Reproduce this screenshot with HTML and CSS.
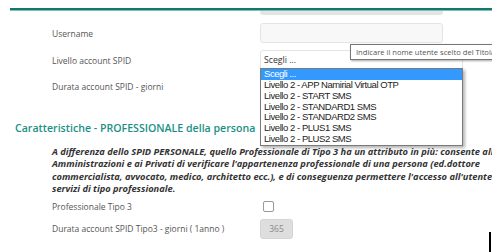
FILE: index.html
```html
<!DOCTYPE html>
<html>
<head>
<meta charset="utf-8">
<link rel="stylesheet" href="styles.css">
</head>
<body>
<div class="page">
  <div class="topline"></div>
  <div class="row prev"><div class="lbl"></div><div class="prev-input"></div></div>
  <div class="row r-user"><div class="lbl">Username</div><div class="input"></div></div>
  <div class="row r-liv"><div class="lbl">Livello account SPID</div><div class="select">Scegli ...</div></div>
  <div class="row r-dur"><div class="lbl">Durata account SPID - giorni</div><div class="input"></div></div>
  <h2 class="heading">Caratteristiche - PROFESSIONALE della persona</h2>
  <p class="desc">A differenza dello SPID PERSONALE, quello Professionale di Tipo 3 ha un attributo in più: consente alle<br>Amministrazioni e ai Privati di verificare l'appartenenza professionale di una persona (ed.dottore<br>commercialista, avvocato, medico, architetto ecc.), e di conseguenza permettere l'accesso all'utente<br>servizi di tipo professionale.</p>
  <div class="row r-prof"><div class="lbl">Professionale Tipo 3</div><div class="check"></div></div>
  <div class="row r-dur3"><div class="lbl">Durata account SPID Tipo3 - giorni ( 1anno )</div><div class="num">365</div></div>

  <div class="tooltip">Indicare il nome utente scelto del Titolare</div>
  <ul class="dropdown">
    <li class="sel">Scegli ...</li>
    <li>Livello 2 - APP Namirial Virtual OTP</li>
    <li>Livello 2 - START SMS</li>
    <li>Livello 2 - STANDARD1 SMS</li>
    <li>Livello 2 - STANDARD2 SMS</li>
    <li>Livello 2 - PLUS1 SMS</li>
    <li>Livello 2 - PLUS2 SMS</li>
  </ul>
  <div class="caret"></div>
</div>
</body>
</html>
```
FILE: styles.css
```css
html, body { margin: 0; padding: 0; background: #fff; }
.page {
  position: relative;
  width: 492px;
  height: 252px;
  overflow: hidden;
  font-family: "Open Sans", "DejaVu Sans", sans-serif;
  color: #555;
  padding-top: 8px;
  box-sizing: border-box;
}
.topline {
  margin-left: 10px;
  height: 2px;
  background: #11786b;
  border-bottom: 1px solid #7fbfb5;
}
.row { display: flex; align-items: center; }
.lbl {
  width: 260px;
  padding-left: 52px;
  box-sizing: border-box;
  font-size: 8.5px;
  color: #555;
  flex: none;
  white-space: nowrap;
}
.prev { height: 5px; align-items: flex-start; }
.prev-input {
  width: 183px; height: 4px;
  background: #e4e4e4;
  border-radius: 0 0 3px 3px;
}
.r-user { margin-top: 7px; height: 20px; }
.input {
  width: 183px; height: 20px;
  box-sizing: border-box;
  background: #f8f8f8;
  border: 1px solid #e4e4e4;
  border-radius: 3px;
}
.r-liv { margin-top: 7px; height: 20px; }
.select {
  width: 203px; height: 20px;
  box-sizing: border-box;
  border: 1px solid #e4e4e4;
  border-radius: 3px;
  font-size: 8.7px;
  color: #333;
  padding: 3px 0 0 3px;
}
.r-dur { margin-top: 6px; height: 20px; }
.heading {
  margin: 24px 0 0 15px;
  font-size: 10.6px;
  font-weight: 600;
  color: #1b8f86;
  line-height: 16px;
  white-space: nowrap;
}
.desc {
  margin: 10px 0 0 52px;
  font-size: 9.3px;
  line-height: 12.4px;
  font-weight: 700;
  font-style: italic;
  color: #333;
  white-space: nowrap;
}
.r-prof { margin-top: 3px; height: 16px; }
.check {
  margin-left: 3px;
  width: 9px; height: 9px;
  border: 1px solid #999;
  border-radius: 2px;
  background: #fff;
}
.r-dur3 { margin-top: 3px; height: 22px; }
.num {
  width: 33px; height: 20px;
  box-sizing: border-box;
  background: #dedede;
  border: 1px solid #d4d4d4;
  border-radius: 3px;
  font-size: 8.5px;
  color: #888;
  text-align: center;
  line-height: 18px;
}
.tooltip {
  position: absolute;
  left: 350px; top: 44px;
  height: 16px;
  box-sizing: border-box;
  padding: 0 5px;
  border: 1px solid #767676;
  background: #fff;
  box-shadow: 1px 1px 2px rgba(0,0,0,0.35);
  font-size: 7.6px;
  line-height: 14px;
  color: #555;
  white-space: nowrap;
}
.dropdown {
  position: absolute;
  left: 260px; top: 68px;
  width: 203px;
  margin: 0; padding: 0;
  list-style: none;
  background: #fff;
  border: 1px solid #7a7a7a;
  box-shadow: 2px 2px 3px rgba(0,0,0,0.3);
  font-family: "Liberation Sans", Arial, sans-serif;
  font-size: 9.5px;
  letter-spacing: -0.45px;
  line-height: 10.8px;
  color: #222;
  box-sizing: border-box;
}
.dropdown li { padding: 0 3px; height: 10.8px; white-space: nowrap; }
.dropdown li.sel { background: #3399ff; color: #fff; height: 11px; }
.caret {
  position: absolute;
  left: 489px; top: 232px;
  width: 2px; height: 20px;
  background: #000;
}
```
